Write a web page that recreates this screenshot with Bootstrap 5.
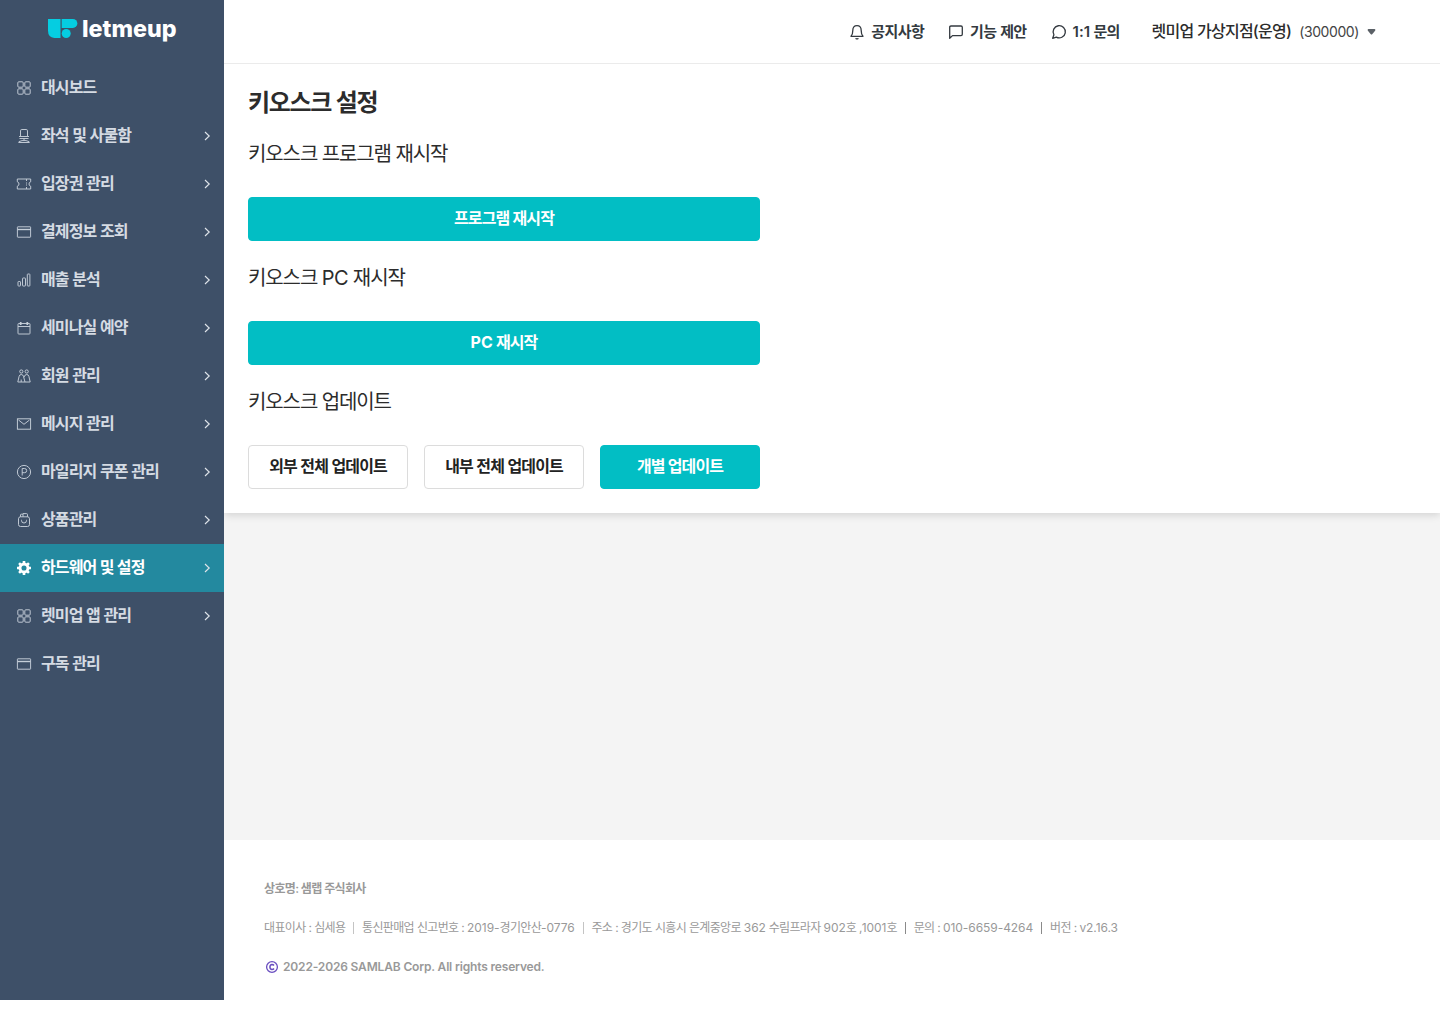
<!DOCTYPE html>
<html lang="ko">
<head>
<meta charset="utf-8">
<meta name="viewport" content="width=device-width, initial-scale=1">
<title>키오스크 설정</title>
<link rel="stylesheet" href="https://cdn.jsdelivr.net/npm/bootstrap@5.3.0/dist/css/bootstrap.min.css">
<style>
  body { font-family: Inter, "Noto Sans CJK KR", sans-serif; color: #2c2c2c; font-size: 16px; line-height: 24px; background: #fff; overflow: hidden; }
  body * { letter-spacing: -.055em; }
  .shell { height: 1000px; }
  .side { width: 224px; background: #3e5068; z-index: 1; }
  .brand { height: 64px; padding: 0 0 4px 48px; }
  .menu-link { height: 48px; padding: 0 10px 1px 16px; color: #d5dbe3; font-weight: 600; border-radius: 0; word-spacing: .4px; }
  .menu-link:hover { color: #fff; }
  .menu-link .label { margin-left: 9px; padding-bottom: 2px; }
  .menu-link svg { flex: none; fill: none; stroke: #c5ced8; stroke-width: .95; }
  .menu-link .ico { margin-top: 1px; }
  .menu-link .chev { margin-top: 1px; stroke: #dfe4ea; stroke-width: 1.15; }
  .menu-link.active { background: #23899f; color: #fff; font-weight: 700; }
  .topbar { height: 64px; border-bottom: 1px solid #ebebeb; padding: 0 64px 0 0; background: #fff; z-index: 1; }
  .top-link { font-size: 15px; font-weight: 600; color: #343a40; text-decoration: none; letter-spacing: -.04em; word-spacing: .5px; }
  .top-link svg { fill: none; stroke: #343a40; stroke-width: 1.3; stroke-linecap: round; stroke-linejoin: round; margin-right: 6px; }
  .latin { letter-spacing: 0; }
  .subtitle .latin { letter-spacing: -.02em; }
  .store { font-weight: 500; color: #2c2c2c; letter-spacing: -.046em; padding-bottom: 1px; }
  .code { font-size: 14px; color: #444; letter-spacing: -.4px; }
  .panel { height: 449px; padding: 24px; background: #fff; box-shadow: 0 2px 8px rgba(0,0,0,.14); }
  .canvas { background: #f4f4f4; }
  .title { font-size: 24px; line-height: 30px; font-weight: 600; margin: 0 0 21px; }
  .subtitle { font-size: 20px; line-height: 30px; font-weight: 400; margin: 0; }
  .form-col { width: 512px; }
  .act { height: 44px; border-radius: 4px; padding: 0 0 1px; font-weight: 600; font-size: 16px; margin-top: 27.6px; margin-bottom: 22.4px; word-spacing: .3px; }
  .act-main { background: #02bec4; color: #fff; border: 1px solid #02bec4; font-weight: 700; }
  .act-line { background: #fff; color: #222; border: 1px solid #dcdcdc; }
  .foot { height: 160px; padding: 40px 40px 0; background: #fff; color: #999; font-size: 12px; line-height: 18px; }
  .foot-row { height: 18px; margin-bottom: 21px; word-spacing: .2px; }
  .foot .latin { letter-spacing: -.06px; }
  .foot .copy { letter-spacing: -.16px; word-spacing: 0; }
  .bar { width: 1px; height: 12px; margin: 0 7.800px 0 8px; background: #c4c4c4; }
  .bar.deep { background: #8a8a8a; }
</style>
<script src="https://cdn.jsdelivr.net/npm/bootstrap@5.3.0/dist/js/bootstrap.bundle.min.js"></script>
</head>
<body>
<svg class="d-none">
  <symbol id="i-grid" viewBox="0 0 16 16"><rect x="1.800" y="1.800" width="5.400" height="5.400" rx="1"/><rect x="8.800" y="1.800" width="5.400" height="5.400" rx="1"/><rect x="1.800" y="8.800" width="5.400" height="5.400" rx="1"/><rect x="8.800" y="8.800" width="5.400" height="5.400" rx="1"/></symbol>
  <symbol id="i-seat" viewBox="0 0 16 16"><path d="M4.500 8V2.800q0-1.300 1.300-1.300h4.400q1.300 0 1.300 1.300V8M3 8.500h10M3.500 10.500h9M8 10.500v2M3 14.500v-.9l3-1h4l3 1v.9M2.500 14.500h11"/></symbol>
  <symbol id="i-ticket" viewBox="0 0 16 16"><path d="M1.300 3h13.400v2.800q-1.700.4-1.700 2.200t1.700 2.200V13H1.300v-2.800Q3 9.800 3 8T1.300 5.800zM10.500 3v2M10.500 6.500v1M10.500 8.500v1M10.500 11v2"/></symbol>
  <symbol id="i-card" viewBox="0 0 16 16"><rect x="1.400" y="2.800" width="13.200" height="10.400" rx=".4"/><path d="M1.400 5.500h13.200" stroke-width="1.400"/></symbol>
  <symbol id="i-chart" viewBox="0 0 16 16"><rect x="2" y="9.500" width="2.500" height="4.500" rx=".6"/><rect x="6.500" y="6" width="3" height="8" rx=".6"/><rect x="11.300" y="2" width="2.600" height="12" rx=".6"/></symbol>
  <symbol id="i-cal" viewBox="0 0 16 16"><rect x="2" y="3.500" width="12" height="10.500" rx=".7"/><path d="M2 6.500h12"/><path d="M4.700 2v3M11.300 2v3" stroke-width="1.700"/></symbol>
  <symbol id="i-people" viewBox="0 0 16 16"><circle cx="5.300" cy="3.500" r="1.600"/><circle cx="10.700" cy="3.500" r="1.600"/><path d="M1.800 14l1.300-5.600Q3.600 6.500 5.300 6.500T7.500 8.400L9 14zM8 9.200q.7-2.700 2.700-2.700 1.700 0 2.200 1.900L14.200 14H9M5.200 14v-2.500"/></symbol>
  <symbol id="i-mail" viewBox="0 0 16 16"><rect x="1.400" y="2.800" width="13.200" height="10.400"/><path d="M2.500 4L8 8.300 13.500 4"/></symbol>
  <symbol id="i-point" viewBox="0 0 16 16"><circle cx="8" cy="8" r="6.600"/><path d="M6.200 11.500v-7h2.200q2.300 0 2.300 2.100T8.400 8.700H6.200"/></symbol>
  <symbol id="i-bag" viewBox="0 0 16 16"><rect x="2.500" y="4.800" width="11" height="9.700" rx="2"/><path d="M4.500 4.800V3q0-.8.8-.8h1.600M7 4.800V1.600h3.500q1 0 1 1v2.200M5.500 7.800v.7q0 2.500 2.500 2.500t2.500-2.500v-.7"/></symbol>
  <symbol id="i-gear" viewBox="0 0 16 16"><circle cx="8" cy="8" r="4" stroke="#fff" stroke-width="2.900"/><path d="M8 1v14M1 8h14M3.050 3.050l9.900 9.900M12.950 3.050l-9.900 9.900" stroke="#fff" stroke-width="2.600" stroke-dasharray="2.200 9.600 2.200"/></symbol>
  <symbol id="i-chev" viewBox="0 0 14 14"><path d="M5 3l4.200 4L5 11"/></symbol>
</svg>
<div class="shell d-flex">
  <aside class="side flex-shrink-0 position-relative">
    <a class="brand d-flex align-items-center" href="#" aria-label="letmeup">
      <svg width="150" height="34" viewBox="0 -2 150 34">
        <g fill="#05cde1"><path d="M0 4h12.500v19H6.300Q0 22.500 0 15.800z"/><path d="M13.700 4h11.200a4.400 4.400 0 0 1 0 8.900H13.700z"/><circle cx="18.200" cy="18.500" r="4.500"/></g>
        <text class="latin" x="34" y="21.600" fill="#fff" font-family="Inter" font-weight="800" font-size="23" textLength="94.500" lengthAdjust="spacingAndGlyphs">letmeup</text>
      </svg>
    </a>
    <nav class="nav flex-column flex-nowrap">
      <a class="nav-link menu-link d-flex align-items-center" href="#"><svg class="ico" width="16" height="16"><use href="#i-grid"/></svg><span class="label">대시보드</span></a>
      <a class="nav-link menu-link d-flex align-items-center" href="#"><svg class="ico" width="16" height="16"><use href="#i-seat"/></svg><span class="label">좌석 및 사물함</span><svg class="chev ms-auto" width="14" height="14"><use href="#i-chev"/></svg></a>
      <a class="nav-link menu-link d-flex align-items-center" href="#"><svg class="ico" width="16" height="16"><use href="#i-ticket"/></svg><span class="label">입장권 관리</span><svg class="chev ms-auto" width="14" height="14"><use href="#i-chev"/></svg></a>
      <a class="nav-link menu-link d-flex align-items-center" href="#"><svg class="ico" width="16" height="16"><use href="#i-card"/></svg><span class="label">결제정보 조회</span><svg class="chev ms-auto" width="14" height="14"><use href="#i-chev"/></svg></a>
      <a class="nav-link menu-link d-flex align-items-center" href="#"><svg class="ico" width="16" height="16"><use href="#i-chart"/></svg><span class="label">매출 분석</span><svg class="chev ms-auto" width="14" height="14"><use href="#i-chev"/></svg></a>
      <a class="nav-link menu-link d-flex align-items-center" href="#"><svg class="ico" width="16" height="16"><use href="#i-cal"/></svg><span class="label">세미나실 예약</span><svg class="chev ms-auto" width="14" height="14"><use href="#i-chev"/></svg></a>
      <a class="nav-link menu-link d-flex align-items-center" href="#"><svg class="ico" width="16" height="16"><use href="#i-people"/></svg><span class="label">회원 관리</span><svg class="chev ms-auto" width="14" height="14"><use href="#i-chev"/></svg></a>
      <a class="nav-link menu-link d-flex align-items-center" href="#"><svg class="ico" width="16" height="16"><use href="#i-mail"/></svg><span class="label">메시지 관리</span><svg class="chev ms-auto" width="14" height="14"><use href="#i-chev"/></svg></a>
      <a class="nav-link menu-link d-flex align-items-center" href="#"><svg class="ico" width="16" height="16"><use href="#i-point"/></svg><span class="label">마일리지 쿠폰 관리</span><svg class="chev ms-auto" width="14" height="14"><use href="#i-chev"/></svg></a>
      <a class="nav-link menu-link d-flex align-items-center" href="#"><svg class="ico" width="16" height="16"><use href="#i-bag"/></svg><span class="label">상품관리</span><svg class="chev ms-auto" width="14" height="14"><use href="#i-chev"/></svg></a>
      <a class="nav-link menu-link active d-flex align-items-center" href="#"><svg class="ico" width="16" height="16"><use href="#i-gear"/></svg><span class="label">하드웨어 및 설정</span><svg class="chev ms-auto" width="14" height="14"><use href="#i-chev"/></svg></a>
      <a class="nav-link menu-link d-flex align-items-center" href="#"><svg class="ico" width="16" height="16"><use href="#i-grid"/></svg><span class="label">렛미업 앱 관리</span><svg class="chev ms-auto" width="14" height="14"><use href="#i-chev"/></svg></a>
      <a class="nav-link menu-link d-flex align-items-center" href="#"><svg class="ico" width="16" height="16"><use href="#i-card"/></svg><span class="label">구독 관리</span></a>
    </nav>
  </aside>
  <div class="canvas flex-grow-1 d-flex flex-column">
    <header class="topbar d-flex align-items-center justify-content-end position-relative">
      <div class="d-flex align-items-center gap-4 me-4 pe-2">
        <a class="top-link d-flex align-items-center" href="#"><svg width="16" height="16" viewBox="0 0 16 16"><path d="M2 12.300h12q-1.800-1.700-1.800-5.800Q12.200 1.700 8 1.700T3.800 6.500q0 4.100-1.800 5.800zM7 14.600q1 .5 2 0"/></svg>공지사항</a>
        <a class="top-link d-flex align-items-center" href="#"><svg width="16" height="16" viewBox="0 0 16 16"><path d="M3 2h10q1.300 0 1.300 1.300v7q0 1.300-1.300 1.300H4.500L1.700 14.300v-11Q1.700 2 3 2z"/></svg>기능 제안</a>
        <a class="top-link d-flex align-items-center" href="#"><svg width="16" height="16" viewBox="0 0 16 16"><path d="M1.700 14.300l1.200-3.600A6.100 6.100 0 1 1 5.300 13.100z"/></svg><span><span class="latin">1:1</span> 문의</span></a>
      </div>
      <a class="d-flex align-items-center text-decoration-none" href="#"><span class="store">렛미업 가상지점(운영)</span><span class="code ms-2">(300000)</span><svg class="ms-2" width="9" height="6" viewBox="0 0 9 6"><path d="M1.300 0h6.400Q9 .5 8.100 1.700L5.400 5q-.9 1-1.800 0L.9 1.700Q0 .5 1.300 0z" fill="#5b6167"/></svg></a>
    </header>
    <main class="panel">
      <h1 class="title">키오스크 설정</h1>
      <div class="form-col">
        <h2 class="subtitle">키오스크 프로그램 재시작</h2>
        <button class="btn act act-main w-100 d-block" type="button">프로그램 재시작</button>
        <h2 class="subtitle">키오스크 <span class="latin">PC</span> 재시작</h2>
        <button class="btn act act-main w-100 d-block" type="button"><span class="latin">PC</span> 재시작</button>
        <h2 class="subtitle">키오스크 업데이트</h2>
        <div class="d-flex gap-3">
          <button class="btn act act-line flex-fill w-100" type="button">외부 전체 업데이트</button>
          <button class="btn act act-line flex-fill w-100" type="button">내부 전체 업데이트</button>
          <button class="btn act act-main flex-fill w-100" type="button">개별 업데이트</button>
        </div>
      </div>
    </main>
    <footer class="foot mt-auto">
      <div class="foot-row fw-semibold">상호명: 샘랩 주식회사</div>
      <div class="foot-row d-flex align-items-center text-nowrap">
        <span>대표이사 : 심세용</span><span class="bar"></span>
        <span>통신판매업 신고번호 : <span class="latin">2019-</span>경기안산<span class="latin">-0776</span></span><span class="bar"></span>
        <span>주소 : 경기도 시흥시 은계중앙로 <span class="latin">362</span> 수림프라자 <span class="latin">902</span>호 ,<span class="latin">1001</span>호</span><span class="bar deep"></span>
        <span>문의 : <span class="latin">010-6659-4264</span></span><span class="bar deep"></span>
        <span>버전 : <span class="latin">v2.16.3</span></span>
      </div>
      <div class="foot-row d-flex align-items-center fw-semibold">
        <svg class="ms-0 me-1" width="15" height="14" viewBox="0 0 15 14" fill="none" stroke="#6a4fc0"><circle cx="8" cy="7" r="5.400" stroke-width="1.300"/><path d="M10 5.500Q9.300 4.500 8 4.500 5.900 4.600 5.900 7T8 9.500q1.300 0 2-1" stroke-width="1.500"/></svg>
        <span class="copy">2022-2026 SAMLAB Corp. All rights reserved.</span>
      </div>
    </footer>
  </div>
</div>
</body>
</html>
